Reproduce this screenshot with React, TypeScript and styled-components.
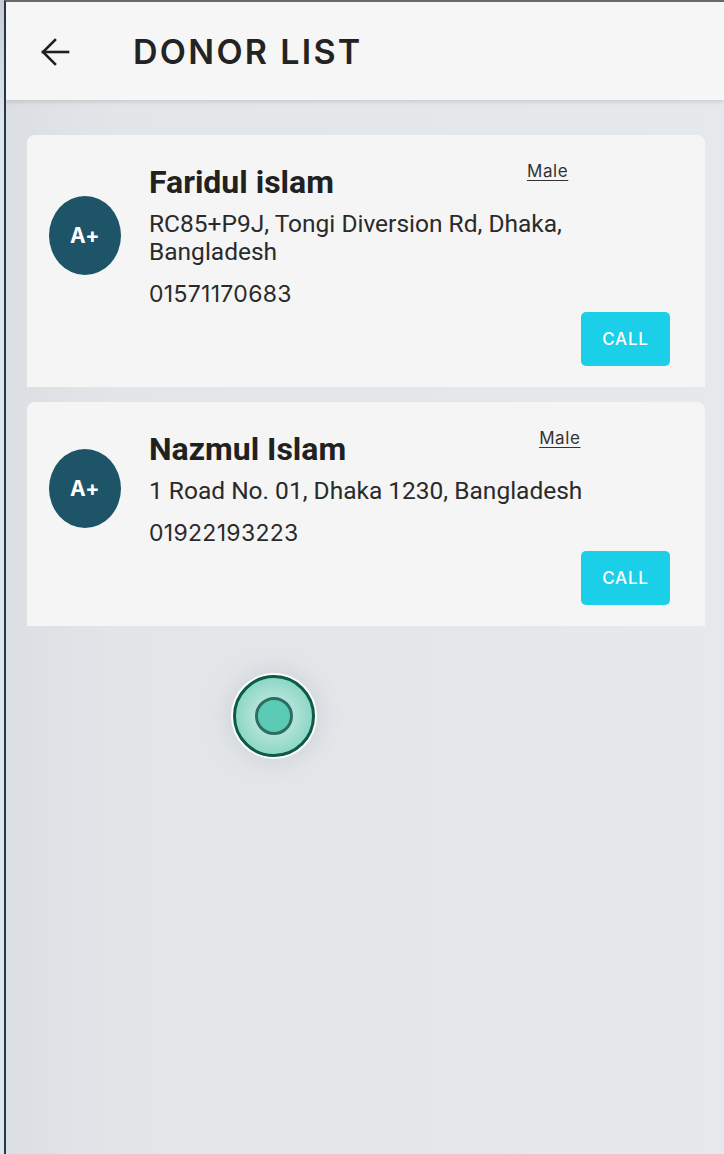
import React from "react";
import styled, { createGlobalStyle } from "styled-components";

const Global = createGlobalStyle`
  html, body { margin: 0; padding: 0; }
  body { background: #e4e7ea; font-family: Roboto, "Liberation Sans", sans-serif; }
`;

const Shell = styled.div`
  display: flex;
  min-height: 1154px;
  background: #dfe6ee;
`;

const LeftStrip = styled.div`
  width: 4px;
  flex: none;
  background: linear-gradient(#c9ced4, #dde5ee 120px, #dde6ef);
`;

const Frame = styled.div`
  flex: 1;
  position: relative;
  display: flex;
  flex-direction: column;
  border-left: 2px solid #24394d;
  border-top: 2px solid #6a6a6a;
  background: linear-gradient(90deg, #dbdfe3 0px, #e3e6e9 120px, #e6e9ec 100%);
`;

const Header = styled.header`
  height: 98px;
  display: flex;
  align-items: center;
  padding-left: 34px;
  background: #f6f6f6;
  box-shadow: 0 2px 4px rgba(0, 0, 0, 0.12);
  position: relative;
  z-index: 1;
`;

const BackButton = styled.button`
  width: 30px;
  height: 30px;
  padding: 0;
  border: none;
  background: none;
  display: flex;
  align-items: center;
  justify-content: center;
  margin-top: 2px;
`;

const Title = styled.h1`
  margin: 0 0 0 63px;
  font-family: Inter, "DejaVu Sans", sans-serif;
  font-weight: 600;
  font-size: 34px;
  letter-spacing: 2.3px;
  color: #232323;
`;

const List = styled.main`
  display: flex;
  flex-direction: column;
  gap: 15px;
  padding: 35px 19px 0 21px;
`;

const Card = styled.section`
  background: #f5f5f5;
  border-radius: 8px 8px 0 0;
  padding: 28px 35px 21px 22px;
  display: flex;
  flex-direction: column;
`;

const Row = styled.div`
  display: flex;
  align-items: center;
  gap: 28px;
`;

const Avatar = styled.div`
  width: 72px;
  height: 79px;
  border-radius: 50%;
  background: #1d5468;
  color: #fff;
  flex: none;
  display: flex;
  align-items: center;
  justify-content: center;
  font-family: Inter, "DejaVu Sans", sans-serif;
  font-weight: 700;
  font-size: 21px;
  letter-spacing: 0.5px;
`;

const Info = styled.div`
  display: flex;
  flex-direction: column;
  max-width: 480px;
`;

const NameRow = styled.div`
  display: flex;
  align-items: flex-start;
  gap: 193px;
`;

const Name = styled.div`
  font-family: Roboto, sans-serif;
  font-weight: 700;
  font-size: 32px;
  line-height: 38px;
  color: #212121;
`;

const Gender = styled.span`
  margin-top: -2px;
  font-family: Inter, "DejaVu Sans", sans-serif;
  font-size: 17px;
  line-height: 20px;
  letter-spacing: 0.6px;
  color: #333;
  text-decoration: underline;
  text-underline-offset: 3px;
`;

const Address = styled.div`
  margin-top: 9px;
  font-family: Roboto, sans-serif;
  font-size: 24.5px;
  line-height: 28px;
  color: #2a2a2a;
`;

const Phone = styled.div`
  margin-top: 14px;
  font-family: Inter, "DejaVu Sans", sans-serif;
  font-size: 23px;
  line-height: 28px;
  letter-spacing: 0.3px;
  color: #2a2a2a;
`;

const Actions = styled.div`
  display: flex;
  justify-content: flex-end;
  margin-top: 4px;
`;

const CallButton = styled.button`
  width: 89px;
  height: 54px;
  border: none;
  border-radius: 5px;
  background: #1ccfe9;
  color: #fff;
  font-family: Inter, "DejaVu Sans", sans-serif;
  font-weight: 500;
  font-size: 17px;
  letter-spacing: 0.8px;
`;

const Fab = styled.div`
  position: absolute;
  left: 227px;
  top: 673px;
  width: 76px;
  height: 76px;
  border-radius: 50%;
  border: 3px solid #0d5a48;
  background: radial-gradient(circle, #d6efe9 0%, #a8e0d3 45%, #6fcdb8 100%);
  box-shadow: 0 0 0 2px #ffffff, 0 0 18px 10px rgba(200, 205, 210, 0.5);
  display: flex;
  align-items: center;
  justify-content: center;
`;

const FabDot = styled.div`
  width: 32px;
  height: 32px;
  border-radius: 50%;
  background: #5ccbb5;
  border: 3px solid #2f6d62;
`;

const donors = [
  {
    name: "Faridul islam",
    group: "A+",
    gender: "Male",
    address: "RC85+P9J, Tongi Diversion Rd, Dhaka, Bangladesh",
    phone: "01571170683",
  },
  {
    name: "Nazmul Islam",
    group: "A+",
    gender: "Male",
    address: "1 Road No. 01, Dhaka 1230, Bangladesh",
    phone: "01922193223",
  },
];

const BackArrow = () => (
  <svg width="30" height="30" viewBox="0 0 30 30" fill="none" stroke="#1f1f1f" strokeWidth="2.6" strokeLinecap="square">
    <path d="M28 15H3" />
    <path d="M15 3L3 15l12 12" />
  </svg>
);

export default function App() {
  return (
    <>
      <Global />
      <Shell>
        <LeftStrip />
        <Frame>
          <Header>
            <BackButton aria-label="back">
              <BackArrow />
            </BackButton>
            <Title>DONOR LIST</Title>
          </Header>
          <List>
            {donors.map((d) => (
              <Card key={d.phone}>
                <Row>
                  <Avatar>{d.group}</Avatar>
                  <Info>
                    <NameRow>
                      <Name>{d.name}</Name>
                      <Gender>{d.gender}</Gender>
                    </NameRow>
                    <Address>{d.address}</Address>
                    <Phone>{d.phone}</Phone>
                  </Info>
                </Row>
                <Actions>
                  <CallButton>CALL</CallButton>
                </Actions>
              </Card>
            ))}
          </List>
          <Fab>
            <FabDot />
          </Fab>
        </Frame>
      </Shell>
    </>
  );
}
